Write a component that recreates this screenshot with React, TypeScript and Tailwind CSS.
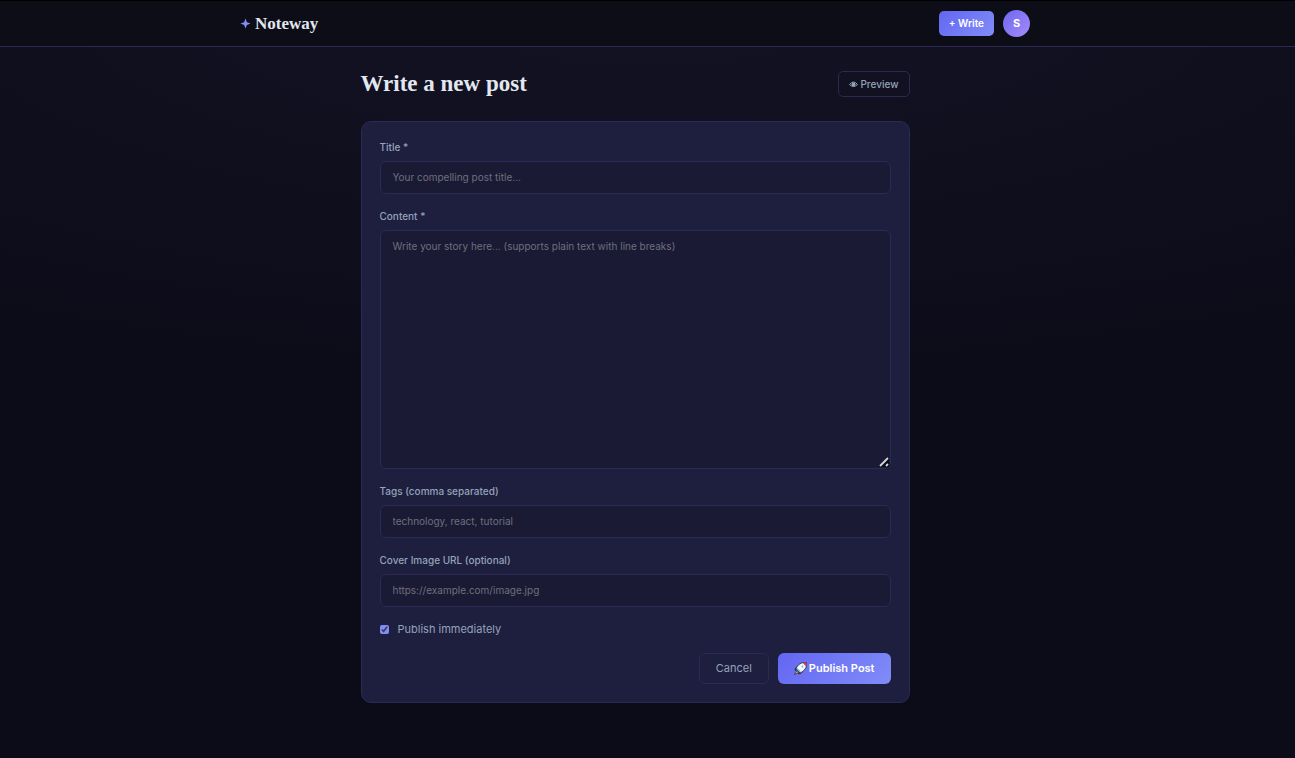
import React from 'react'

const labelClass = "text-[10px] leading-4 font-medium text-[#94a3b8]"
const inputClass = "block w-full rounded-md border border-[#2a2a55] bg-[#1a1a35] px-3 text-[10px] text-[#e2e8f0] placeholder:text-[#6f6f7c] outline-none focus:border-[#818cf8]"

const Navbar = () => {
  return (
    <header className="border-t border-b border-t-black border-b-[#2b2858] bg-[#0d0d17] pr-[25px]">
      <nav className="mx-auto flex h-[45px] max-w-[790px] items-center justify-between">
        <a href="#" className="flex items-center gap-1 font-['Liberation_Serif',serif] text-[17px] font-bold text-[#e2e8f0]">
          <svg className="size-[11px] fill-[#818cf8]" viewBox="0 0 12 12" aria-hidden="true">
            <path d="M6 0.5 L7.5 4.5 L11.5 6 L7.5 7.5 L6 11.5 L4.5 7.5 L0.5 6 L4.5 4.5 Z" />
          </svg>
          <span>Noteway</span>
        </a>
        <div className="flex items-center gap-[9px]">
          <a href="#" className="flex h-[25px] items-center rounded-[5px] bg-linear-135 from-[#6366f1] to-[#818cf8] px-[10px] text-[10px] font-semibold text-white">+ Write</a>
          <button aria-label="Account" className="size-[27px] rounded-full bg-linear-135 from-[#6c67f0] to-[#a78bfa] text-[11px] font-bold text-white">S</button>
        </div>
      </nav>
    </header>
  )
}

const Rocket = () => {
  return (
    <svg className="size-[13px]" viewBox="0 0 26 26" aria-hidden="true">
      <path d="M8 8 L3 12 L2 17 L7 15 Z M18 17 L15 22 L9 24 L11 19 Z" fill="#b3242f" stroke="#151529" strokeWidth="1.2" />
      <path d="M6 17 L1 25 L9 21 Z" fill="#ffc83d" stroke="#151529" strokeWidth="1.2" />
      <path d="M25 1 C15 0 7 5 4 14 L12 22 C21 18 26 11 25 1 Z" fill="#f4f8fb" stroke="#151529" strokeWidth="1.4" />
      <path d="M25 1 C22 1 20 1.5 18 2.5 L23.5 8 C24.5 6 25 4 25 1 Z" fill="#df3544" />
      <circle cx="17" cy="9" r="1.8" fill="#4dbbeb" />
      <path d="M6 13 L12.5 19.5" stroke="#4dbbeb" strokeWidth="2.5" />
    </svg>
  )
}

const PostForm = () => {
  return (
    <form className="flex flex-col gap-[14px] rounded-[10px] border border-[#2a2a55] bg-[#1e1e3f] px-[18px] pt-[17px] pb-[18px]" onSubmit={(e) => e.preventDefault()}>
      <div className="flex flex-col gap-[6px]">
        <label htmlFor="title" className={labelClass}>Title *</label>
        <input id="title" className={inputClass + " h-[33px] pb-0.5"} placeholder="Your compelling post title..." />
      </div>
      <div className="flex flex-col gap-[6px]">
        <label htmlFor="content" className={labelClass}>Content *</label>
        <div className="relative">
          <textarea id="content" className={inputClass + " h-[239px] resize-y py-[7px] leading-4 scheme-dark"} placeholder="Write your story here... (supports plain text with line breaks)" />
          {/* resize grip, drawn over the browser's own */}
          <svg className="pointer-events-none absolute right-px bottom-px size-3" viewBox="0 0 12 12" aria-hidden="true">
            <path d="M0 0 H12 V8 Q12 12 8 12 H0 Z" fill="#1a1a35" />
            <path d="M1 11 L11 1 V11 Z" fill="#0b0b16" />
            <path d="M2 10 L10 2 M8 10 L10 8" stroke="#d6d6de" strokeWidth="1.8" />
          </svg>
        </div>
      </div>
      <div className="flex flex-col gap-[6px]">
        <label htmlFor="tags" className={labelClass}>Tags (comma separated)</label>
        <input id="tags" className={inputClass + " h-[33px] pb-0.5"} placeholder="technology, react, tutorial" />
      </div>
      <div className="flex flex-col gap-[6px]">
        <label htmlFor="cover" className={labelClass}>Cover Image URL (optional)</label>
        <input id="cover" className={inputClass + " h-[33px] pb-0.5"} placeholder="https://example.com/image.jpg" />
      </div>
      <div className="flex items-center gap-[9px]">
        <input id="publish" type="checkbox" defaultChecked className="size-[9px] accent-[#818cf8] scheme-dark" />
        <label htmlFor="publish" className="text-[11px] leading-4 text-[#94a3b8]">Publish immediately</label>
      </div>
      <div className="flex justify-end gap-[9px] pt-0.5">
        <button type="button" className="h-[31px] rounded-md border border-[#2a2a55] px-4 text-[11px] text-[#94a3b8]">Cancel</button>
        <button type="submit" className="flex h-[31px] items-center gap-0.5 rounded-md bg-linear-135 from-[#6366f1] to-[#818cf8] px-4 text-[11px] font-semibold text-white">
          <Rocket />
          Publish Post
        </button>
      </div>
    </form>
  )
}

const App = () => {
  return (
    <div className="min-h-screen bg-[#0c0b18] bg-[radial-gradient(1300px_400px_at_50%_0,#131324,#0c0b18)] font-['Inter',sans-serif]">
      <Navbar />
      <main className="pt-6 pr-[25px] pb-12">
        <div className="mx-auto max-w-[549px]">
          <div className="mb-6 flex items-center justify-between">
            <h1 className="font-['Liberation_Serif',serif] text-[23px] leading-[26px] font-bold text-[#e2e8f0]">Write a new post</h1>
            <button className="flex h-[26px] items-center gap-0.5 rounded-[5px] border border-[#2a2a4c] px-[10px] text-[10px] font-medium text-[#94a3b8]">
              <svg className="h-[7px] w-[9px]" viewBox="0 0 18 14" aria-hidden="true">
                <path d="M1 7 Q9 -3 17 7 Q9 15 1 7 Z" fill="none" stroke="currentColor" strokeWidth="2" />
                <circle cx="9" cy="7" r="4" fill="currentColor" />
              </svg>
              Preview
            </button>
          </div>
          <PostForm />
        </div>
      </main>
    </div>
  )
}

export default App
